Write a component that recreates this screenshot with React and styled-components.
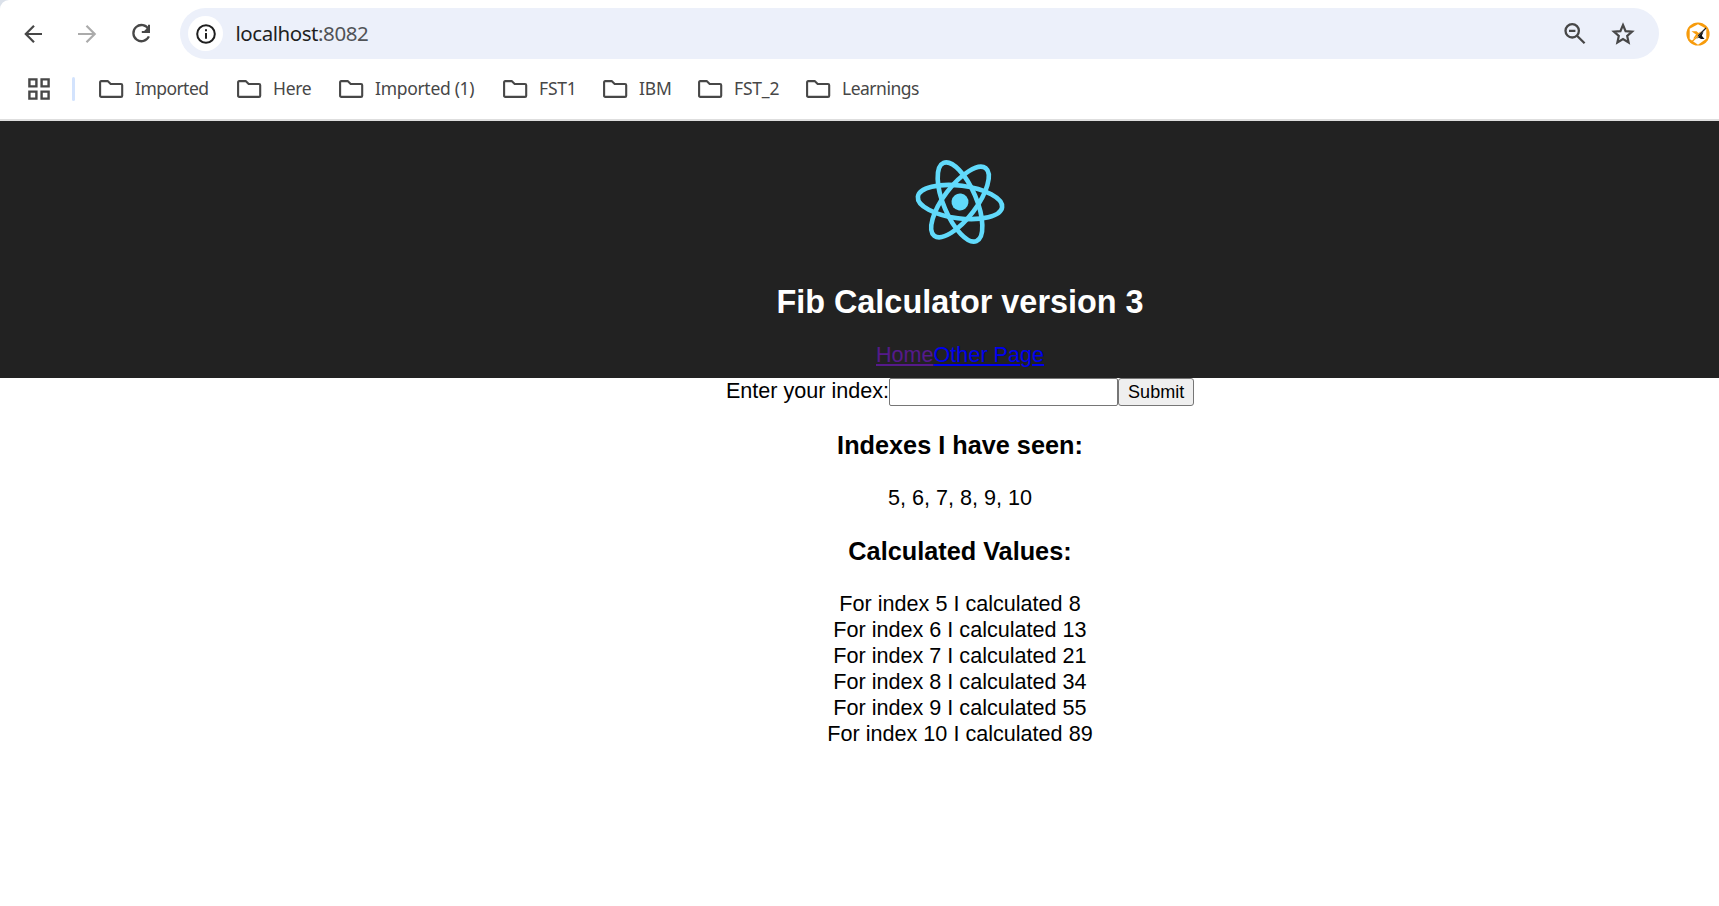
import React from 'react';
import styled, { createGlobalStyle } from 'styled-components';

const GlobalStyle = createGlobalStyle`
  * { box-sizing: border-box; }
  html, body { margin: 0; padding: 0; background: #fff; overflow: hidden; }
`;

const Window = styled.div`
  width: 100vw;
  height: 100vh;
  overflow: hidden;
  background: #dbe1ea;
`;

const Chrome = styled.div`
  height: 121px;
  background: #fff;
  border-top-left-radius: 9px;
  border-bottom: 2px solid #dedede;
  font-family: 'Noto Sans', 'Open Sans', sans-serif;
`;

const Toolbar = styled.div`
  display: flex;
  align-items: center;
  height: 59px;
  padding: 8px 9px 0 22px;
`;

const NavButtons = styled.div`
  display: flex;
  gap: 30px;
  width: 158px;
`;

const Icon = styled.svg`
  display: block;
  flex: none;
  width: ${(p) => p.$w || 24}px;
  height: ${(p) => p.$h || p.$w || 24}px;
`;

const AddressBar = styled.div`
  display: flex;
  align-items: center;
  width: 1479px;
  height: 51px;
  padding: 0 24px 0 8px;
  border-radius: 26px;
  background: #ecf0fa;
`;

const SiteInfo = styled.div`
  display: flex;
  align-items: center;
  justify-content: center;
  width: 35px;
  height: 35px;
  border-radius: 50%;
  background: #fff;
`;

const Url = styled.div`
  flex: 1;
  margin-left: 12.5px;
  padding-bottom: 2px;
  font-size: 20.5px;
  line-height: 28px;
  letter-spacing: -0.45px;
  color: #1f1f1f;
`;

const Port = styled.span`
  color: #505357;
`;

const AddressActions = styled.div`
  display: flex;
  gap: 24px;
`;

const Extension = styled.div`
  margin-left: 27px;
`;

const Bookmarks = styled.div`
  display: flex;
  align-items: center;
  height: 60px;
  padding-left: 27px;
`;

const Divider = styled.div`
  width: 3px;
  height: 24px;
  margin: 0 24px 0 21px;
  border-radius: 2px;
  background: #d3e3fd;
`;

const Bookmark = styled.div`
  display: flex;
  align-items: center;
  gap: 11px;
  flex: none;
  width: ${(p) => p.$width}px;
  font-size: 17.5px;
  letter-spacing: ${(p) => p.$tracking}px;
  color: #474747;
  white-space: nowrap;
`;

const BookmarkName = styled.span`
  padding-bottom: 2px;
  line-height: 24px;
`;

const Viewport = styled.main`
  height: calc(100vh - 121px);
  overflow: hidden;
  background: #fff;
`;

const Page = styled.div`
  width: 1920px;
  font-family: 'Liberation Sans', Arial, sans-serif;
  font-size: 21.6px;
  line-height: 26px;
  text-align: center;
  color: #000;
`;

const Header = styled.header`
  height: 257px;
  padding-top: 27px;
  background: #222;
  color: #fff;
`;

const Logo = styled.svg`
  display: block;
  width: 108px;
  height: 108px;
  margin: 0 auto;
  overflow: visible;
`;

const Title = styled.h1`
  margin: 28px 0 21px;
  font-size: 32.4px;
  line-height: 37px;
`;

const NavLink = styled.a`
  color: ${(p) => (p.$visited ? '#551a8b' : '#0000ee')};
  text-decoration: underline;
`;

const Form = styled.form`
  display: flex;
  justify-content: center;
  align-items: flex-start;
  height: 28px;
`;

const IndexInput = styled.input`
  width: 229px;
  height: 28px;
  margin: 0;
  border: 1px solid #767676;
  border-radius: 2px;
  background: #fff;
`;

const Submit = styled.button`
  width: 76px;
  height: 28px;
  margin: 0;
  padding: 0;
  border: 1px solid #767676;
  border-radius: 3px;
  background: #efefef;
  color: #000;
  font: 18px/26px 'Liberation Sans', Arial, sans-serif;
`;

const Heading = styled.h3`
  margin: ${(p) => p.$before || 25}px 0 25px;
  font-size: 25.27px;
  line-height: 29px;
`;

const Text = styled.div``;

const folders = [
  { name: 'Imported', width: 138, tracking: -0.55 },
  { name: 'Here', width: 102, tracking: -0.3 },
  { name: 'Imported (1)', width: 164, tracking: -0.3 },
  { name: 'FST1', width: 100, tracking: -0.2 },
  { name: 'IBM', width: 95, tracking: -0.2 },
  { name: 'FST_2', width: 108, tracking: -0.2 },
  { name: 'Learnings', width: 120, tracking: -0.5 },
];

const values = [[5, 8], [6, 13], [7, 21], [8, 34], [9, 55], [10, 89]];

const FolderIcon = () => (
  <Icon $w={25} $h={18} viewBox="0 0 25 18" fill="none" stroke="#474747" strokeWidth="2.1" strokeLinejoin="round">
    <path d="M2.2 1.1H8.7L11.7 4H22Q23.2 4 23.2 5.2V15.7Q23.2 16.9 22 16.9H2.3Q1.1 16.9 1.1 15.7V2.3Q1.1 1.1 2.2 1.1Z" />
  </Icon>
);

export default function App() {
  return (
    <Window>
      <GlobalStyle />
      <Chrome>
        <Toolbar>
          <NavButtons>
            <Icon viewBox="0 0 24 24" fill="none" stroke="#474747" strokeWidth="2.2">
              <path d="M20 12H3.5M12 3.8L3.8 12L12 20.2" />
            </Icon>
            <Icon viewBox="0 0 24 24" fill="none" stroke="#ababab" strokeWidth="2.2">
              <path d="M2 12H18.5M10.5 3.8L18.7 12L10.5 20.2" />
            </Icon>
            <Icon viewBox="0 0 24 24" fill="none" stroke="#474747" strokeWidth="2.3">
              <path d="M18.6 7.2A8.1 8.1 0 1 0 18.9 14.4" />
              <path d="M19 2.8V10H11.8" strokeWidth="2" />
              <path d="M19 4.2V9.6H13.6Z" fill="#474747" stroke="none" />
            </Icon>
          </NavButtons>
          <AddressBar>
            <SiteInfo>
              <Icon $w={20} viewBox="0 0 20 20" fill="none" stroke="#1f1f1f" strokeWidth="2">
                <circle cx="10" cy="10" r="8.8" />
                <path d="M10 9V14.7M10 5.3V7.3" />
              </Icon>
            </SiteInfo>
            <Url>localhost<Port>:8082</Port></Url>
            <AddressActions>
              <Icon viewBox="0 0 24 24" fill="none" stroke="#474747" strokeWidth="2.3">
                <circle cx="9.2" cy="8.8" r="6.7" />
                <path d="M14 13.7L21.6 21.3M6 8.8H12.4" />
              </Icon>
              <Icon viewBox="0 0 24 24" fill="none" stroke="#474747" strokeWidth="2.2">
                <path d="M12 3L14.6 9.1L21.1 9.7L16.2 14L17.6 20.4L12 17L6.4 20.4L7.8 14L2.9 9.7L9.4 9.1Z" />
              </Icon>
            </AddressActions>
          </AddressBar>
          <Extension>
            <Icon viewBox="0 0 24 24">
              <circle cx="12" cy="12" r="11.6" fill="#f79b0b" />
              <path d="M12 2.2L20.3 6.8V16.7L12 22.8L3.7 17V6.8Z" fill="#fff" />
              <path d="M5.5 9.2H10.5L12.5 11L16 9L8.5 16.5H7.2L10 12.5Z" fill="#f79b0b" />
              <path d="M15.5 11L17.5 9.8L15.8 13.8L18.5 17H15L12.5 15.5L10.3 17Z" fill="#111" />
              <path d="M20 6L12 14" stroke="#222" strokeWidth="1.2" />
              <path d="M12 14L5.5 20" stroke="#f79b0b" strokeWidth="1.2" />
            </Icon>
          </Extension>
        </Toolbar>
        <Bookmarks>
          <Icon $w={24} viewBox="0 0 24 24" fill="none" stroke="#474747" strokeWidth="2.4">
            <path d="M2.4 2.4H9.4V9.4H2.4ZM14.6 2.4H21.6V9.4H14.6ZM2.4 14.6H9.4V21.6H2.4ZM14.6 14.6H21.6V21.6H14.6Z" />
          </Icon>
          <Divider />
          {folders.map((f) => (
            <Bookmark key={f.name} $width={f.width} $tracking={f.tracking}>
              <FolderIcon />
              <BookmarkName>{f.name}</BookmarkName>
            </Bookmark>
          ))}
        </Bookmarks>
      </Chrome>
      <Viewport>
        <Page>
          <Header>
            <Logo viewBox="-14 -14 28 28" fill="none" stroke="#61dafb" strokeWidth="1.2">
              <g transform="rotate(7.2)">
                <circle r="2.2" fill="#61dafb" stroke="none" />
                <ellipse rx="11" ry="4.25" />
                <ellipse rx="11" ry="4.25" transform="rotate(60)" />
                <ellipse rx="11" ry="4.25" transform="rotate(120)" />
              </g>
            </Logo>
            <Title>Fib Calculator version 3</Title>
            <NavLink href="#" $visited>Home</NavLink>
            <NavLink href="#other">Other Page</NavLink>
          </Header>
          <Form>
            <label htmlFor="index">Enter your index:</label>
            <IndexInput id="index" />
            <Submit type="button">Submit</Submit>
          </Form>
          <Heading>Indexes I have seen:</Heading>
          <Text>{values.map(([index]) => index).join(', ')}</Text>
          <Heading $before={26}>Calculated Values:</Heading>
          {values.map(([index, value]) => (
            <Text key={index}>For index {index} I calculated {value}</Text>
          ))}
        </Page>
      </Viewport>
    </Window>
  );
}
